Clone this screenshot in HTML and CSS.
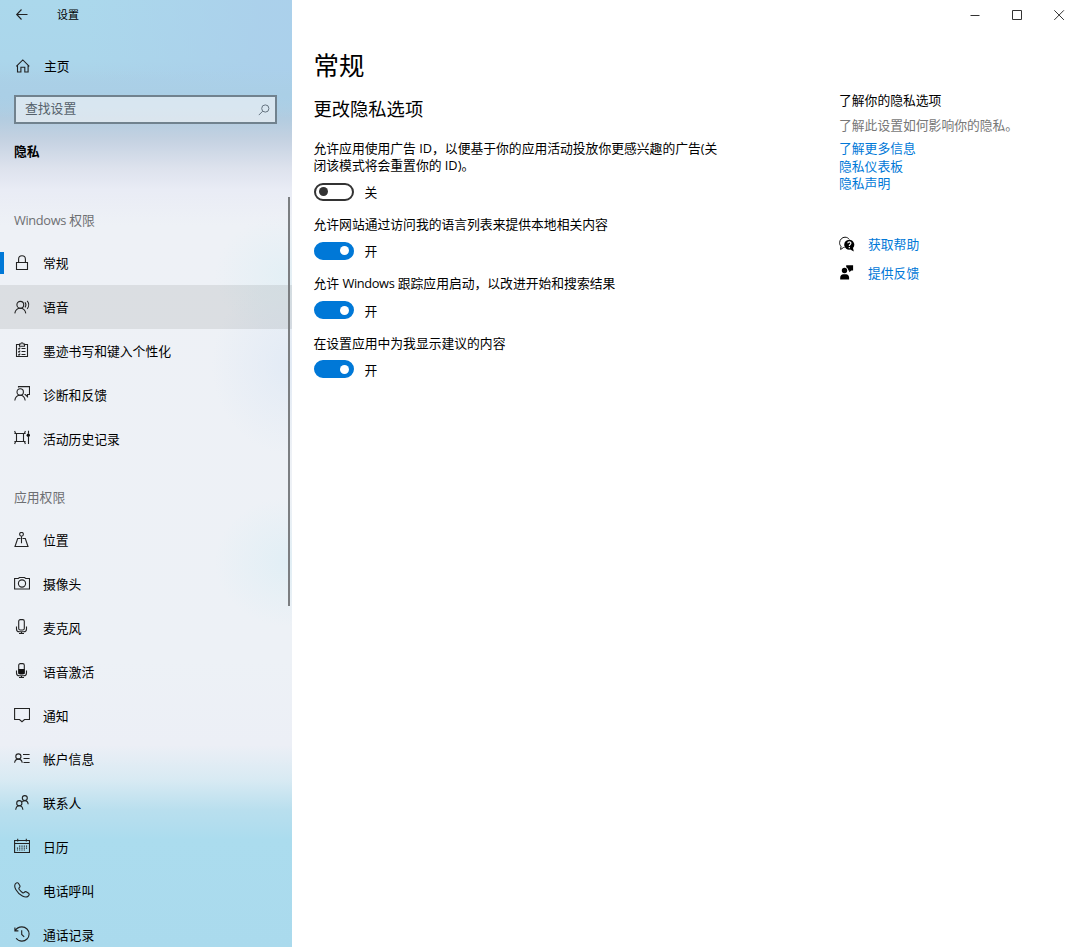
FILE: index.html
```html
<!DOCTYPE html>
<html lang="zh-CN">
<head>
    <meta charset="UTF-8">
    <meta name="viewport" content="width=device-width, initial-scale=1.0">
    <title>设置</title>
    <link rel="stylesheet" href="styles.css">
</head>
<body>
    <div class="window">
        <aside class="sidebar">
            <header class="sidebar-title">
                <svg class="back-icon" width="16" height="16" viewBox="0 0 16 16"><path d="M13.5 7.5H3M7.5 2.5L2.7 7.5l4.8 5"/></svg>
                <span>设置</span>
            </header>
            <a class="home">
                <svg class="icon" width="16" height="16" viewBox="0 0 16 16"><path d="M1.3 8.3L7.8 1.9l6.5 6.4M2.5 7.4V14h3.4V9.3h3.9V14h3.3V7.4"/></svg>
                <span>主页</span>
            </a>
            <div class="search">
                <span>查找设置</span>
                <svg class="search-icon" width="12" height="12" viewBox="0 0 12 12"><circle cx="7.3" cy="4.5" r="3.6"/><path d="M4.7 7.2L.8 11.1"/></svg>
            </div>
            <h3 class="category">隐私</h3>

            <nav class="nav">
                <p class="nav-heading"><span class="latin">Windows</span> 权限</p>
                <ul>
                    <li class="nav-item selected">
                        <svg class="icon" width="16" height="16" viewBox="0 0 16 16"><path d="M2.5 7.5h11v7h-11zM4.6 7.5V4.2a3.4 3.4 0 0 1 6.8 0v3.3"/></svg>
                        <span>常规</span>
                    </li>
                    <li class="nav-item hover">
                        <svg class="icon" width="16" height="16" viewBox="0 0 16 16"><circle cx="6.3" cy="5.8" r="3.4"/><path d="M.8 14.3c.5-3 2.6-5.1 5.5-5.1s5 2.1 5.5 5.1M11 3.3c1 1.4 1 3.7 0 5.1M13.2 1.8c1.9 2.3 1.9 5.8 0 8.1"/></svg>
                        <span>语音</span>
                    </li>
                    <li class="nav-item">
                        <svg class="icon" width="16" height="16" viewBox="0 0 16 16"><path d="M5.5 2.5h-3v12h11v-12h-3M5.5 4.3V2h1.3a1.2 1.2 0 0 1 2.4 0h1.3v2.3zM7.5 6.5h4M7.5 9.5h4M7.5 12.5h4M4.3 6.5l.7.7 1.2-1.5M4.3 9.500l.7.7 1.2-1.500M4.300 12.500l.7.7 1.200-1.500"/></svg>
                        <span>墨迹书写和键入个性化</span>
                    </li>
                    <li class="nav-item">
                        <svg class="icon" width="16" height="16" viewBox="0 0 16 16"><circle cx="6.200" cy="6" r="3.200"/><path d="M.8 14.500c.4-3.300 2.500-5.300 5.400-5.300s4.500 2 5 5.300M4.500 1.500V.6h11v7.900h-2v2.200l-2.200-2.200h-.8"/></svg>
                        <span>诊断和反馈</span>
                    </li>
                    <li class="nav-item">
                        <svg class="icon" width="16" height="16" viewBox="0 0 16 16"><path d="M.4 3.500h11.200M.4 11.500h11.200M2.500 3.500v8M9.500 3.500v8M.6 1l1 2.500M11.400 1l-1 2.500M1.600 11.500L.6 14M10.400 11.500l1 2.500M14.500 .8v3M14.500 7v7"/><circle class="fill" cx="14.300" cy="5.300" r="1.700"/></svg>
                        <span>活动历史记录</span>
                    </li>
                </ul>
                <p class="nav-heading">应用权限</p>
                <ul>
                    <li class="nav-item">
                        <svg class="icon" width="16" height="16" viewBox="0 0 16 16"><circle cx="7.500" cy="2.300" r="1.900"/><path d="M7.500 4.200v7M6.500 6.500H3.700L1 14.500h13L11.300 6.500H8.500"/></svg>
                        <span>位置</span>
                    </li>
                    <li class="nav-item">
                        <svg class="icon" width="16" height="16" viewBox="0 0 16 16"><path d="M.6 2.500h3.700l1.200-1h5l1.200 1h3.800v10.500H.6z"/><circle cx="8" cy="7.500" r="3.600"/></svg>
                        <span>摄像头</span>
                    </li>
                    <li class="nav-item">
                        <svg class="icon" width="16" height="16" viewBox="0 0 16 16"><rect x="4.700" y=".6" width="5.600" height="10.400" rx="1.600"/><path d="M2.500 7.500V10c0 1.800 1 2.800 2.800 2.800h4.400c1.800 0 2.800-1 2.800-2.800V7.500M7.500 12.800v1.700M5 14.500h5"/></svg>
                        <span>麦克风</span>
                    </li>
                    <li class="nav-item">
                        <svg class="icon" width="16" height="16" viewBox="0 0 16 16"><rect x="4.700" y=".6" width="5.600" height="10.400" rx="1.600"/><path class="fill" d="M4.500 6h6v5h-6z"/><path d="M2.500 7.500V10c0 1.800 1 2.800 2.800 2.800h4.400c1.800 0 2.800-1 2.800-2.800V7.500M7.500 12.800v1.700M5 14.500h5"/></svg>
                        <span>语音激活</span>
                    </li>
                    <li class="nav-item">
                        <svg class="icon" width="16" height="16" viewBox="0 0 16 16"><path d="M.6 1.500h14.900v11h-5l-2.500 2.200-2.500-2.200H.6z"/></svg>
                        <span>通知</span>
                    </li>
                    <li class="nav-item">
                        <svg class="icon" width="16" height="16" viewBox="0 0 16 16"><circle cx="4.400" cy="5.500" r="2.600"/><path d="M.6 11.800c.3-2.300 1.700-3.700 3.800-3.700s3.500 1.400 3.800 3.700M9 3.500h6.600M9.500 7.500h6.100M9.500 11.500h6.100"/></svg>
                        <span>帐户信息</span>
                    </li>
                    <li class="nav-item">
                        <svg class="icon" width="16" height="16" viewBox="0 0 16 16"><circle cx="5.300" cy="8.200" r="2.600"/><path d="M1.700 14.700c.3-2.300 1.500-3.900 3.600-3.900s3.300 1.600 3.600 3.900M8.300 6.800c.6-.8 1.400-1.200 2.500-1.200 2 0 3.100 1.500 3.400 3.700"/><circle cx="10.800" cy="3.100" r="2.500"/></svg>
                        <span>联系人</span>
                    </li>
                    <li class="nav-item">
                        <svg class="icon" width="16" height="16" viewBox="0 0 16 16"><path d="M.6 2.500h14.900v12H.6zM.6 5.500h14.900M3.700.7v2.700M12.300.7v2.700"/><path class="dots" d="M3.500 9.500v3M5.700 7.500v5M8 7.500v5M10.300 7.500v5M12.500 7.500v4"/></svg>
                        <span>日历</span>
                    </li>
                    <li class="nav-item">
                        <svg class="icon" width="16" height="16" viewBox="0 0 16 16"><path d="M1.400 1.800C2.300.7 3.700.3 4.400 1.300l1.500 2.400c.5.900-.1 1.400-.8 2.100-.5.600-.3 1 .2 1.700.9 1.200 1.900 2.200 3 3 .7.500 1.200.6 1.700.1.700-.7 1.300-1.300 2.200-.8l2.400 1.500c1 .7.600 2.100-.5 3-1.400 1.100-3.500.9-5.700-.3C5.600 12.500 3.300 10.200 1.800 7.500.6 5.300.4 3.200 1.400 1.800z"/></svg>
                        <span>电话呼叫</span>
                    </li>
                    <li class="nav-item">
                        <svg class="icon" width="16" height="16" viewBox="0 0 16 16"><path d="M1.200 4.800C2.500 2.400 5 .9 7.900.9c4 0 7.200 3.200 7.200 7.100s-3.200 7.100-7.200 7.100c-2.400 0-4.500-1.100-5.800-2.900M.9 1.500v3.400h3.500M7.700 4.300v4.200l2.500 2.400"/></svg>
                        <span>通话记录</span>
                    </li>
                </ul>
            </nav>
            <div class="scrollbar"></div>
        </aside>

        <main class="page">
            <div class="window-controls">
                <svg width="12" height="12" viewBox="0 0 12 12"><path d="M1.500 6.500h9"/></svg>
                <svg width="12" height="12" viewBox="0 0 12 12"><path d="M1.500 1.500h9v9h-9z"/></svg>
                <svg width="12" height="12" viewBox="0 0 12 12"><path d="M1.300 1.300l9.600 9.600M10.900 1.300L1.300 10.900"/></svg>
            </div>

            <div class="columns">
                <section class="options">
                    <h1>常规</h1>
                    <h2>更改隐私选项</h2>

                    <div class="option">
                        <p>允许应用使用广告 ID，以便基于你的应用活动投放你更感兴趣的广告(关<br>闭该模式将会重置你的 ID)。</p>
                        <div class="toggle-row"><span class="toggle"></span><span>关</span></div>
                    </div>
                    <div class="option">
                        <p>允许网站通过访问我的语言列表来提供本地相关内容</p>
                        <div class="toggle-row"><span class="toggle on"></span><span>开</span></div>
                    </div>
                    <div class="option">
                        <p>允许 <span class="latin">Windows</span> 跟踪应用启动，以改进开始和搜索结果</p>
                        <div class="toggle-row"><span class="toggle on"></span><span>开</span></div>
                    </div>
                    <div class="option">
                        <p>在设置应用中为我显示建议的内容</p>
                        <div class="toggle-row"><span class="toggle on"></span><span>开</span></div>
                    </div>
                </section>

                <section class="related">
                    <h4>了解你的隐私选项</h4>
                    <p class="hint">了解此设置如何影响你的隐私。</p>
                    <div class="links">
                        <a>了解更多信息</a>
                        <a>隐私仪表板</a>
                        <a>隐私声明</a>
                    </div>
                    <div class="support">
                        <svg width="16" height="16" viewBox="0 0 16 16"><path class="line" d="M5.500 11.500H4.500L1.600 13.500l.4-3.300C.9 9.200.5 8 .6 6.600.8 3.500 3.200 1.200 6 1.200c1.800 0 3.300.8 4.300 2.200"/><path d="M10.300 3.700a5 5 0 1 0 .9 9.900l3.600 1.900-.8-3.500a5 5 0 0 0-3.700-8.300z"/><path class="mark" d="M8.800 7.300c.1-2 3.200-1.900 3.100 0-.1 1.200-1.600 1.200-1.600 2.600M10.300 11v1.200"/></svg>
                        <a>获取帮助</a>
                    </div>
                    <div class="support">
                        <svg width="16" height="16" viewBox="0 0 16 16"><circle cx="5.500" cy="6.500" r="2.700"/><path d="M1.200 15.500v-2c0-2 1.300-3.300 3-3.300h2.900c1.700 0 3 1.300 3 3.300v2zM7.200 1.200h6.900v5.200h-1.700L10.200 8.300V6.400H9.300C9.200 4.700 8.400 3.800 7.200 3.200z"/></svg>
                        <a>提供反馈</a>
                    </div>
                </section>
            </div>
        </main>
    </div>
</body>
</html>
```

FILE: styles.css
```css
* {
    box-sizing: border-box;
}

body {
    margin: 0;
    font-family: "Open Sans", "Noto Sans CJK SC", sans-serif;
    font-size: 12.8px;
    color: #000;
    background: #fff;
}

h1, h2, h3, h4, p, ul {
    margin: 0;
    padding: 0;
    font-weight: normal;
}

.window {
    display: flex;
    height: 947px;
    overflow: hidden;
}

.latin {
    letter-spacing: -0.35px;
}

/* --- Sidebar --- */
.sidebar {
    position: relative;
    display: flex;
    flex-direction: column;
    width: 292px;
    height: 947px;
    flex-shrink: 0;
    overflow: hidden;
    background:
        radial-gradient(ellipse 75px 65px at 290px 562px, rgba(222, 238, 245, 0.8), rgba(222, 238, 245, 0)),
        radial-gradient(ellipse 70px 60px at 285px 275px, rgba(225, 239, 245, 0.8), rgba(225, 239, 245, 0)),
        radial-gradient(ellipse 80px 90px at 292px 365px, rgba(225, 234, 245, 0.9), rgba(225, 234, 245, 0)),
        linear-gradient(180deg, rgba(171, 207, 235, 0) 70px, #aacfe6 95px, rgba(178, 204, 224, 0) 118px),
        linear-gradient(90deg, rgba(171, 207, 235, 0) 30%, rgba(171, 207, 235, 0.8) 90%) 0 0 / 292px 100px no-repeat,
        linear-gradient(180deg, #abd8ec 0, #abd6eb 60px, #aacfe6 90px, #b2cce0 118px, #c3d1e1 138px, #dde2ed 168px, #e9ecf5 190px, #eef1f6 225px, #edf1f6 660px, #eceff6 745px, #d8eaf3 780px, #b9dfee 810px, #abdcee 840px, #aadaed 947px);
}

.sidebar > * {
    flex-shrink: 0;
}

.sidebar-title {
    display: flex;
    align-items: center;
    height: 30px;
    padding-left: 14px;
    font-size: 11px;
}

.sidebar-title span {
    margin: -2px 0 0 27px;
}

.home {
    display: flex;
    align-items: center;
    height: 30px;
    margin-top: 21px;
    padding-left: 15px;
}

.home span {
    margin: -2px 0 0 13px;
}

.icon,
.back-icon {
    flex-shrink: 0;
    fill: none;
    stroke: #222;
    stroke-width: 1.1;
}

.icon .fill {
    fill: #111;
    stroke: none;
}

.icon .dots {
    stroke-dasharray: 1.2 0.8;
}

.search {
    display: flex;
    align-items: center;
    justify-content: space-between;
    width: 263px;
    height: 29px;
    margin: 14px 0 0 14px;
    padding: 0 5px 0 9px;
    border: 2px solid #71828e;
    background: rgba(239, 242, 246, 0.65);
    color: #56626b;
}

.search span {
    margin-top: -4px;
}

.search-icon {
    fill: none;
    stroke: #667480;
    stroke-width: 1;
}

.category {
    height: 24px;
    margin: 15px 0 0 14px;
    line-height: 24px;
    font-size: 12.8px;
    font-weight: bold;
}

.nav-heading {
    height: 40px;
    margin-top: 38px;
    padding-left: 14px;
    line-height: 39px;
    color: #6d6f72;
}

.nav ul + .nav-heading {
    margin-top: 18px;
}

.nav ul {
    list-style: none;
}

.nav-item {
    display: flex;
    align-items: center;
    height: 43.8px;
    padding-left: 14px;
}

.nav-item span {
    margin-left: 13px;
}

.nav-item.selected {
    background: linear-gradient(#0078d7, #0078d7) 0 11px / 4px 22px no-repeat;
}

.nav-item.hover {
    background: rgba(0, 0, 0, 0.08);
}

.scrollbar {
    position: absolute;
    top: 197px;
    right: 2px;
    width: 2px;
    height: 409px;
    background: #7b7e81;
}

/* --- Main page --- */
.page {
    flex: 1;
}

.window-controls {
    display: flex;
    justify-content: flex-end;
    align-items: center;
    gap: 30px;
    height: 29px;
    padding-right: 15px;
}

.window-controls svg {
    fill: none;
    stroke: #333;
    stroke-width: 1;
}

.columns {
    display: flex;
    padding-left: 21.5px;
}

.options {
    width: 525.5px;
}

.options h1 {
    height: 40px;
    margin-top: 16px;
    line-height: 40px;
    font-size: 25.5px;
}

.options h2 {
    height: 30px;
    margin-top: 9px;
    line-height: 30px;
    font-size: 18.3px;
}

.option {
    margin-bottom: 15px;
    white-space: nowrap;
}

.options h2 + .option {
    margin-top: 16px;
}

.option p {
    line-height: 16.8px;
}

.toggle-row {
    display: flex;
    align-items: center;
    gap: 11px;
    height: 19px;
    margin-top: 8.5px;
}

.toggle {
    display: flex;
    align-items: center;
    width: 40px;
    height: 18px;
    padding: 0 3px;
    border: 2px solid #333;
    border-radius: 9px;
}

.toggle::before {
    content: "";
    width: 9px;
    height: 9px;
    border-radius: 50%;
    background: #333;
}

.toggle.on {
    justify-content: flex-end;
    border-color: #0078d7;
    background: #0078d7;
}

.toggle.on::before {
    background: #fff;
}

/* --- Related links --- */
.related h4 {
    height: 20px;
    margin-top: 61px;
    line-height: 20px;
}

.hint {
    height: 20px;
    margin-top: 5px;
    line-height: 20px;
    color: #777;
}

a {
    color: #0078d7;
}

.home {
    color: #000;
}

.links {
    display: flex;
    flex-direction: column;
    margin: 5px 0 37px;
    line-height: 17.5px;
}

.support {
    display: flex;
    align-items: center;
    gap: 13px;
    height: 28.5px;
}

.support .line {
    fill: none;
    stroke: #111;
}

.support .mark {
    fill: none;
    stroke: #fff;
    stroke-width: 1.2;
}
```
